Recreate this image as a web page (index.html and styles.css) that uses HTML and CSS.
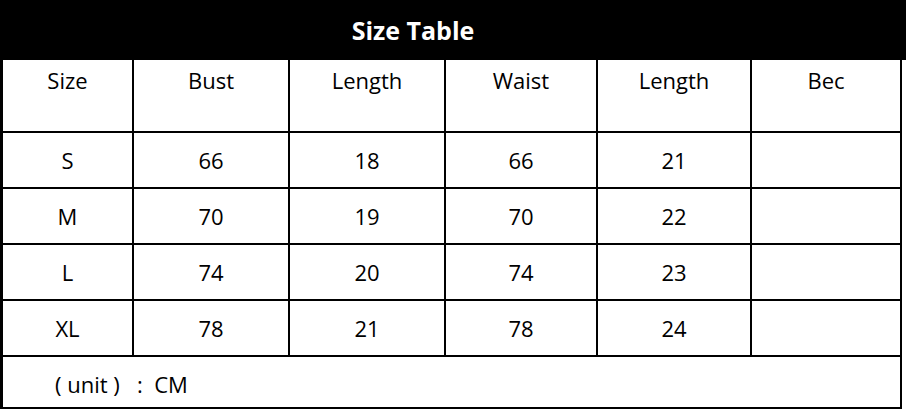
FILE: index.html
```html
<!DOCTYPE html>
<html>
<head>
<meta charset="utf-8">
<link rel="stylesheet" href="styles.css">
</head>
<body>
<div class="title">Size Table</div>
<div class="grid">
  <div class="cell head">Size</div>
  <div class="cell head">Bust</div>
  <div class="cell head">Length</div>
  <div class="cell head">Waist</div>
  <div class="cell head">Length</div>
  <div class="cell head">Bec</div>

  <div class="cell">S</div><div class="cell">66</div><div class="cell">18</div><div class="cell">66</div><div class="cell">21</div><div class="cell"></div>
  <div class="cell">M</div><div class="cell">70</div><div class="cell">19</div><div class="cell">70</div><div class="cell">22</div><div class="cell"></div>
  <div class="cell">L</div><div class="cell">74</div><div class="cell">20</div><div class="cell">74</div><div class="cell">23</div><div class="cell"></div>
  <div class="cell">XL</div><div class="cell">78</div><div class="cell">21</div><div class="cell">78</div><div class="cell">24</div><div class="cell"></div>

  <div class="cell unit">( unit )   :  CM</div>
</div>
</body>
</html>
```
FILE: styles.css
```css
html, body {
  margin: 0;
  padding: 0;
  background: #fff;
}
body {
  width: 906px;
  height: 412px;
  overflow: hidden;
  font-family: "Open Sans", "Noto Sans CJK SC", sans-serif;
  color: #000;
}
.title {
  height: 60px;
  background: #000;
  color: #fff;
  font-weight: 700;
  font-size: 25px;
  line-height: 60px;
  text-align: center;
  padding-right: 80px;
  box-sizing: border-box;
}
.grid {
  width: 902px;
  box-sizing: border-box;
  display: grid;
  grid-template-columns: 129px 154px 154px 150px 152px 148px;
  grid-template-rows: 71px 54px 54px 54px 54px 50px;
  gap: 2px;
  padding: 0 2px 2px 3px;
  background: #000;
}
.cell {
  background: #fff;
  font-size: 22px;
  display: flex;
  align-items: center;
  justify-content: center;
}
.cell.head {
  align-items: flex-start;
  padding-top: 6px;
  line-height: 28px;
}
.cell.unit {
  grid-column: 1 / -1;
  justify-content: flex-start;
  padding-left: 52px;
  padding-top: 4px;
  white-space: pre;
}
```
